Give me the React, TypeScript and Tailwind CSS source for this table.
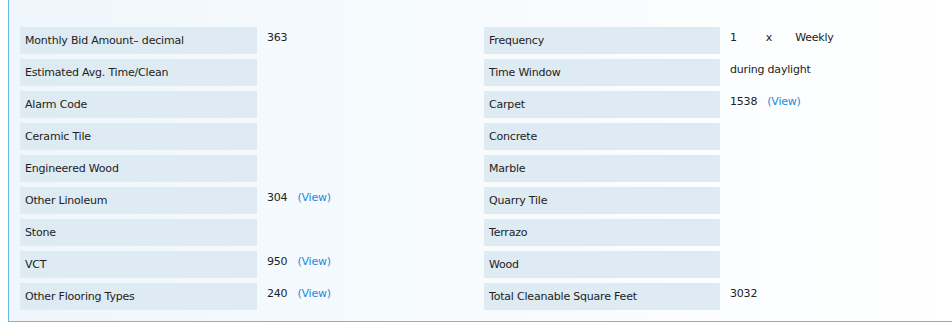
const left: { label: string; value?: string; view?: boolean }[] = [
  { label: "Monthly Bid Amount\u2013 decimal", value: "363" },
  { label: "Estimated Avg. Time/Clean" },
  { label: "Alarm Code" },
  { label: "Ceramic Tile" },
  { label: "Engineered Wood" },
  { label: "Other Linoleum", value: "304", view: true },
  { label: "Stone" },
  { label: "VCT", value: "950", view: true },
  { label: "Other Flooring Types", value: "240", view: true },
];

const right: { label: string; value?: string; view?: boolean; freq?: boolean }[] = [
  { label: "Frequency", freq: true },
  { label: "Time Window", value: "during daylight" },
  { label: "Carpet", value: "1538", view: true },
  { label: "Concrete" },
  { label: "Marble" },
  { label: "Quarry Tile" },
  { label: "Terrazo" },
  { label: "Wood" },
  { label: "Total Cleanable Square Feet", value: "3032" },
];

function Label({ text }: { text: string }) {
  return (
    <div className="flex h-[27px] items-center bg-[#deebf3] pl-[5px] pt-[2px]">{text}</div>
  );
}

function Value({ value, view }: { value?: string; view?: boolean }) {
  return (
    <div className="flex h-[27px] items-start pl-[10px] pt-[3px]">
      {value && <span>{value}</span>}
      {view && <span className="ml-[10px] text-[#1a8ade]">(View)</span>}
    </div>
  );
}

export default function App() {
  return (
    <div className="h-[327px] bg-white font-['DejaVu_Sans',sans-serif] text-[11px] tracking-[-0.2px] text-[#222]">
      <div className="ml-[8px] border-b border-l border-[#6cb8e6] bg-gradient-to-r from-[#eff7fc] to-white pb-[11px] pl-[11px] pt-[27px]">
        <div className="grid grid-cols-[237px_227px_236px_1fr] gap-y-[5px]">
          {left.map((l, i) => {
            const r = right[i];
            return [
              <Label key={`l${i}`} text={l.label} />,
              <Value key={`lv${i}`} value={l.value} view={l.view} />,
              <Label key={`r${i}`} text={r.label} />,
              r.freq ? (
                <div key={`rv${i}`} className="flex h-[27px] items-start pl-[10px] pt-[3px]">
                  <span>1</span>
                  <span className="ml-[29px]">x</span>
                  <span className="ml-[23px]">Weekly</span>
                </div>
              ) : (
                <Value key={`rv${i}`} value={r.value} view={r.view} />
              ),
            ];
          })}
        </div>
      </div>
    </div>
  );
}
